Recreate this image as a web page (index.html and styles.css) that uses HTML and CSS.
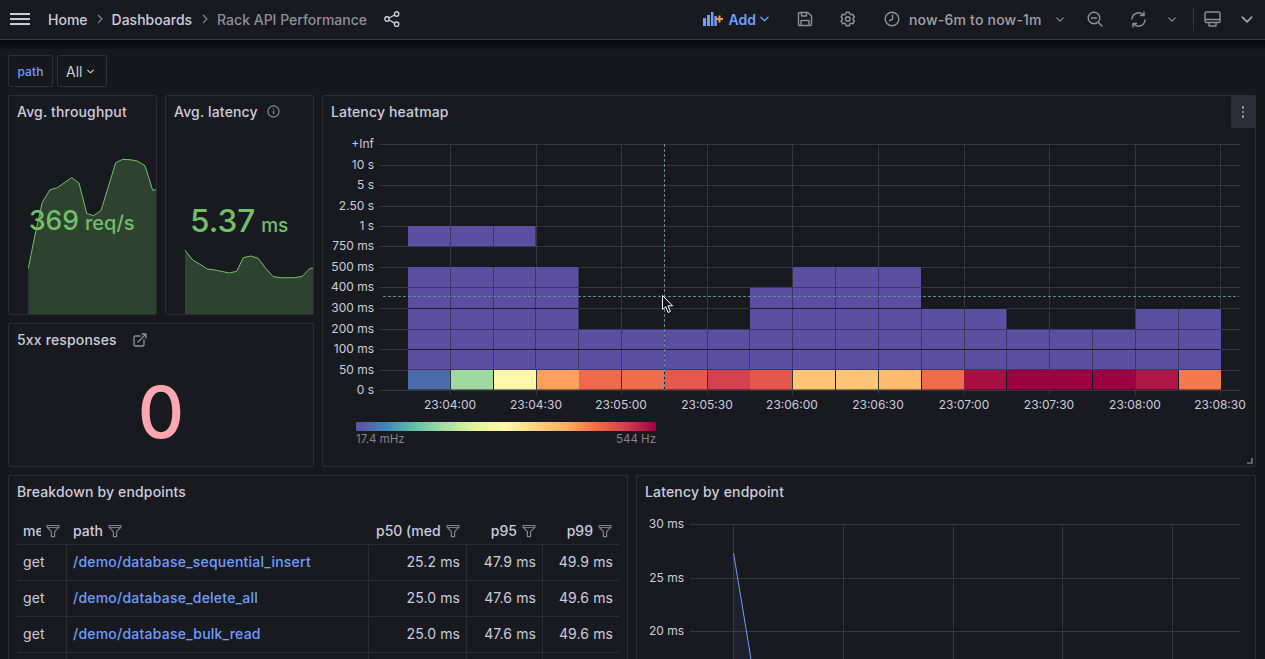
FILE: index.html
```html
<!DOCTYPE html>
<html lang="en">
<head>
<meta charset="utf-8">
<title>Rack API Performance</title>
<link rel="stylesheet" href="styles.css">
</head>
<body>
<svg class="defs" width="0" height="0" aria-hidden="true">
  <symbol id="funnel" viewBox="0 0 14 14"><path d="M1 1.5h12v1.6L8.6 7.6V12.6H5.4V7.6L1 3.1z" fill="none" stroke="currentColor" stroke-width="1.2" stroke-linejoin="round"/><path d="M1.5 3.6h11" stroke="currentColor" stroke-width="1"/></symbol>
  <symbol id="chev" viewBox="0 0 10 6"><path d="M1 1l4 4 4-4" fill="none" stroke="currentColor" stroke-width="1.5" stroke-linecap="round" stroke-linejoin="round"/></symbol>
</svg>

<header class="topbar">
  <svg class="burger" width="20" height="14" viewBox="0 0 20 14"><path d="M0 2h20M0 7h20M0 12h20" stroke="currentColor" stroke-width="1.8"/></svg>
  <nav class="crumbs">
    <span>Home</span>
    <svg class="crumb-sep" width="6" height="10" viewBox="0 0 6 10"><path d="M1 1l4 4-4 4" fill="none" stroke="currentColor" stroke-width="1.2"/></svg>
    <span>Dashboards</span>
    <svg class="crumb-sep" width="6" height="10" viewBox="0 0 6 10"><path d="M1 1l4 4-4 4" fill="none" stroke="currentColor" stroke-width="1.2"/></svg>
    <span class="crumb-current">Rack API Performance</span>
  </nav>
  <svg class="share" width="16" height="16" viewBox="0 0 16 16"><g fill="none" stroke="currentColor" stroke-width="1.4"><circle cx="3" cy="8" r="2.2"/><circle cx="12.6" cy="3" r="2.2"/><circle cx="12.6" cy="13.2" r="2.2"/><path d="M5 7l5.6-3M5 9l5.6 3.2"/></g></svg>

  <div class="tools">
    <svg class="add-icon" width="20" height="14" viewBox="0 0 20 14"><g fill="#6e9fff"><rect x="0" y="6" width="3" height="8"/><rect x="4" y="3" width="3" height="11"/><rect x="8" y="0" width="2.4" height="14"/><rect x="11.4" y="4" width="2.4" height="10"/></g><path d="M13 7h7M16.5 3.5v7" stroke="#ff9830" stroke-width="2"/></svg>
    <span class="add-text">Add</span>
    <svg class="add-chev" width="9" height="6"><use href="#chev"/></svg>
    <svg class="tool save" width="16" height="16" viewBox="0 0 16 16"><g fill="none" stroke="currentColor" stroke-width="1.4" stroke-linejoin="round"><path d="M1.5 2.5a1 1 0 0 1 1-1h8.4l3.6 3.6v8.400a1 1 0 0 1-1 1h-11a1 1 0 0 1-1-1z"/><path d="M4.500 1.500v3.500h5V1.500M4 14.500V9.500h8v5"/></g></svg>
    <svg class="tool gear" width="18" height="18" viewBox="0 0 24 24"><path fill="currentColor" d="M19.9,12.66a1,1,0,0,1,0-1.32L21.18,9.9a1,1,0,0,0,.12-1.17l-2-3.46a1,1,0,0,0-1.07-.48l-1.88.38a1,1,0,0,1-1.15-.66l-.61-1.83A1,1,0,0,0,13.64,2h-4a1,1,0,0,0-1,.68L8.08,4.51a1,1,0,0,1-1.15.66L5,4.79A1,1,0,0,0,4,5.27L2,8.73A1,1,0,0,0,2.1,9.9l1.27,1.44a1,1,0,0,1,0,1.32L2.1,14.1A1,1,0,0,0,2,15.27l2,3.46a1,1,0,0,0,1.07.48l1.88-.38a1,1,0,0,1,1.15.66l.61,1.83a1,1,0,0,0,1,.68h4a1,1,0,0,0,.95-.68l.61-1.83a1,1,0,0,1,1.15-.66l1.88.38a1,1,0,0,0,1.07-.48l2-3.46a1,1,0,0,0-.12-1.17ZM18.41,14l.8.9-1.28,2.22-1.18-.24a3,3,0,0,0-3.45,2L12.92,20H10.36L10,18.86a3,3,0,0,0-3.45-2l-1.18.24L4.07,14.89l.8-.9a3,3,0,0,0,0-4l-.8-.9L5.35,6.89l1.18.24a3,3,0,0,0,3.45-2L10.36,4h2.56l.38,1.14a3,3,0,0,0,3.45,2l1.18-.24,1.28,2.22-.8.9A3,3,0,0,0,18.41,14ZM11.64,8a4,4,0,1,0,4,4A4,4,0,0,0,11.64,8Zm0,6a2,2,0,1,1,2-2A2,2,0,0,1,11.64,14Z"/></svg>
    <svg class="tool clock" width="16" height="16" viewBox="0 0 16 16"><g fill="none" stroke="currentColor" stroke-width="1.4" stroke-linecap="round"><circle cx="8" cy="8" r="6.800"/><path d="M8.500 4v4.500L5.500 9.500"/></g></svg>
    <span class="time">now-6m to now-1m</span>
    <svg class="tool time-chev" width="8" height="5"><use href="#chev"/></svg>
    <svg class="tool zoom-out" width="16" height="16" viewBox="0 0 16 16"><g fill="none" stroke="currentColor" stroke-width="1.4" stroke-linecap="round"><circle cx="7" cy="7" r="5.800"/><path d="M11.400 11.400L15 15M4.500 7h5"/></g></svg>
    <svg class="tool refresh" width="17" height="17" viewBox="0 0 17 17"><g fill="none" stroke="currentColor" stroke-width="1.4" stroke-linecap="round" stroke-linejoin="round"><path d="M15 9a6.600 6.600 0 0 1-11.600 3.800"/><path d="M2 8A6.600 6.600 0 0 1 13.600 4.200"/><path d="M14 1v3.500h-3.500M3 16v-3.500h3.500"/></g></svg>
    <svg class="tool refresh-chev" width="8" height="5"><use href="#chev"/></svg>
    <span class="divider"></span>
    <svg class="tool tv" width="17" height="16" viewBox="0 0 17 16"><g fill="none" stroke="currentColor" stroke-width="1.4" stroke-linejoin="round"><rect x="1" y="1" width="15" height="10.500" rx="1.500"/><path d="M1 8.500h15M5 11.500v3.500h7v-3.500"/></g></svg>
    <svg class="tool tv-chev" width="12" height="7"><use href="#chev"/></svg>
  </div>
</header>
<div class="band"></div>

<main class="content">
  <div class="vars">
    <span class="var-label">path</span>
    <span class="var-select">All<svg width="7" height="5"><use href="#chev"/></svg></span>
  </div>

  <section class="row-top">
    <article class="panel">
      <h2 class="panel-title">Avg. throughput</h2>
      <svg class="spark" viewBox="9 96 147 218" preserveAspectRatio="none">
        <path class="spark-fill" d="M28.300 268.300L35 235L42.300 202.300L50 189.700L57.300 187.700L71.700 177.700L79 183L86.700 213.300L93.300 215.700L101 210.700L115.700 162.700L122.700 159.300L130 159.700L137.300 161L145 165.700L152.700 190.300L156.700 189.300V315H28.300Z"/>
        <path class="spark-line" d="M28.300 268.300L35 235L42.300 202.300L50 189.700L57.300 187.700L71.700 177.700L79 183L86.700 213.300L93.300 215.700L101 210.700L115.700 162.700L122.700 159.300L130 159.700L137.300 161L145 165.700L152.700 190.300L156.700 189.300"/>
      </svg>
      <div class="stat stat-rps"><span class="num">369</span><span class="unit">req/s</span></div>
    </article>

    <article class="panel">
      <h2 class="panel-title">Avg. latency
        <svg class="title-ic info" width="13" height="13" viewBox="0 0 13 13"><circle cx="6.500" cy="6.500" r="5.600" fill="none" stroke="currentColor" stroke-width="1.100"/><path d="M6.500 5.800v3.200M6.500 3.600v1" stroke="currentColor" stroke-width="1.300"/></svg>
      </h2>
      <svg class="spark" viewBox="166 96 147 218" preserveAspectRatio="none">
        <path class="spark-fill" d="M185 250.300L192.700 260L200 264.300L207.300 269L215 270L229.300 273L236.700 271.300L243.300 257.700L250.700 256L258.300 258.300L265.700 268.300L273.300 276.700L280.700 277.700L295 277.700L302.300 276.300L310 268.300L313.300 268.300V315H185Z"/>
        <path class="spark-line" d="M185 250.300L192.700 260L200 264.300L207.300 269L215 270L229.300 273L236.700 271.300L243.300 257.700L250.700 256L258.300 258.300L265.700 268.300L273.300 276.700L280.700 277.700L295 277.700L302.300 276.300L310 268.300L313.300 268.300"/>
      </svg>
      <div class="stat stat-ms"><span class="num">5.37</span><span class="unit">ms</span></div>
    </article>

    <article class="panel panel-heat">
      <h2 class="panel-title">Latency heatmap</h2>
      <span class="panel-menu"><i></i><i></i><i></i></span>
      <svg class="heat" width="932" height="337" viewBox="323 129 932 337">
        <defs>
          <linearGradient id="spectral">
            <stop offset="0" stop-color="#5e4fa2"/><stop offset=".1" stop-color="#3f87b8"/><stop offset=".2" stop-color="#66c2a5"/><stop offset=".3" stop-color="#abdda4"/><stop offset=".4" stop-color="#e6f598"/><stop offset=".5" stop-color="#fff8a8"/><stop offset=".6" stop-color="#fed27f"/><stop offset=".7" stop-color="#fdae61"/><stop offset=".8" stop-color="#f46d43"/><stop offset=".9" stop-color="#d53e4f"/><stop offset="1" stop-color="#9e0142"/>
          </linearGradient>
          <clipPath id="purple-area">
            <rect x="408" y="226" width="128" height="21"/><rect x="408" y="267" width="171" height="104"/><rect x="579" y="329" width="171" height="42"/><rect x="750" y="287" width="43" height="84"/><rect x="793" y="267" width="128" height="104"/><rect x="921" y="308" width="86" height="63"/><rect x="1007" y="329" width="128" height="42"/><rect x="1135" y="308" width="86" height="63"/>
          </clipPath>
        </defs>
        <path class="grid-line" d="M379 144.500H1240M379 165.500H1240M379 185.500H1240M379 206.500H1240M379 226.500H1240M379 246.500H1240M379 267.500H1240M379 287.500H1240M379 308.500H1240M379 329.500H1240M379 349.500H1240M379 370.500H1240M379 390.500H1240"/>
        <path class="grid-line" d="M450.500 144V395M536.500 144V395M621.500 144V395M707.500 144V395M792.500 144V395M878.500 144V395M964.500 144V395M1049.500 144V395M1135.500 144V395M1220.500 144V395"/>

        <g class="purple">
          <rect x="408" y="226" width="128" height="20"/><rect x="408" y="267" width="171" height="103"/><rect x="579" y="329" width="171" height="41"/><rect x="750" y="287" width="43" height="83"/><rect x="793" y="267" width="128" height="103"/><rect x="921" y="308" width="86" height="62"/><rect x="1007" y="329" width="128" height="41"/><rect x="1135" y="308" width="86" height="62"/>
        </g>
        <rect x="408" y="370" width="42" height="19.500" fill="#4c6cab"/>
        <rect x="451" y="370" width="42" height="19.500" fill="#a0d9a0"/>
        <rect x="494" y="370" width="42" height="19.500" fill="#fbf6a8"/>
        <rect x="537" y="370" width="42" height="19.500" fill="#fea05e"/>
        <rect x="579" y="370" width="42" height="19.500" fill="#ef6a4a"/>
        <rect x="622" y="370" width="42" height="19.500" fill="#f06c4a"/>
        <rect x="665" y="370" width="42" height="19.500" fill="#e6584c"/>
        <rect x="708" y="370" width="42" height="19.500" fill="#d4414e"/>
        <rect x="750" y="370" width="42" height="19.500" fill="#e6574b"/>
        <rect x="793" y="370" width="42" height="19.500" fill="#fec576"/>
        <rect x="836" y="370" width="42" height="19.500" fill="#fec576"/>
        <rect x="879" y="370" width="42" height="19.500" fill="#febb6e"/>
        <rect x="922" y="370" width="42" height="19.500" fill="#f06b49"/>
        <rect x="964" y="370" width="42" height="19.500" fill="#a80f42"/>
        <rect x="1007" y="370" width="43" height="19.500" fill="#9c0040"/>
        <rect x="1050" y="370" width="42" height="19.500" fill="#9c0040"/>
        <rect x="1093" y="370" width="42" height="19.500" fill="#9c0040"/>
        <rect x="1136" y="370" width="42" height="19.500" fill="#ae1745"/>
        <rect x="1179" y="370" width="42" height="19.500" fill="#f47a4d"/>

        <g clip-path="url(#purple-area)">
          <path class="seam" d="M450.500 226V370M493.500 226V370M535.500 226V370M578.500 226V370M621.500 226V370M664.500 226V370M707.500 226V370M749.500 226V370M792.500 226V370M835.500 226V370M878.500 226V370M921.500 226V370M964.500 226V370M1006.500 226V370M1049.500 226V370M1092.500 226V370M1135.500 226V370M1178.500 226V370"/>
          <path class="seam" d="M400 246.500H1230M400 287.500H1230M400 329.500H1230M400 369.500H1230"/>
          <path class="seam-dark" d="M400 308.500H1230M400 349.500H1230"/>
        </g>

        <path class="cross" d="M664.500 144V390M383 296.500H1239"/>

        <g class="axis axis-y">
          <text x="374" y="148">+Inf</text><text x="374" y="169">10 s</text><text x="374" y="189">5 s</text><text x="374" y="210">2.50 s</text><text x="374" y="230">1 s</text><text x="374" y="250">750 ms</text><text x="374" y="271">500 ms</text><text x="374" y="291">400 ms</text><text x="374" y="312">300 ms</text><text x="374" y="333">200 ms</text><text x="374" y="353">100 ms</text><text x="374" y="374">50 ms</text><text x="374" y="394">0 s</text>
        </g>
        <g class="axis axis-x">
          <text x="450" y="409">23:04:00</text><text x="536" y="409">23:04:30</text><text x="621" y="409">23:05:00</text><text x="707" y="409">23:05:30</text><text x="792" y="409">23:06:00</text><text x="878" y="409">23:06:30</text><text x="964" y="409">23:07:00</text><text x="1049" y="409">23:07:30</text><text x="1135" y="409">23:08:00</text><text x="1220" y="409">23:08:30</text>
        </g>

        <rect x="356" y="422" width="300" height="9" rx="1" fill="url(#spectral)"/>
        <text class="legend" x="356" y="443">17.4 mHz</text>
        <text class="legend legend-end" x="656" y="443">544 Hz</text>

        <path d="M662.500 295.500V309.500L665.800 306.600L668 312.500L670.400 311.400L668 305.800H672.500Z" fill="#111" stroke="#fff" stroke-width="1"/>
      </svg>
      <svg class="resize" width="6" height="6" viewBox="0 0 6 6"><path d="M0 5h5V0" fill="none" stroke="currentColor" stroke-width="1.600"/></svg>
    </article>

    <article class="panel panel-5xx">
      <h2 class="panel-title">5xx responses
        <svg class="title-ic ext" width="16" height="16" viewBox="0 0 24 24"><path fill="currentColor" d="M18,10.82a1,1,0,0,0-1,1V19a1,1,0,0,1-1,1H5a1,1,0,0,1-1-1V8A1,1,0,0,1,5,7h7.18a1,1,0,0,0,0-2H5A3,3,0,0,0,2,8V19a3,3,0,0,0,3,3H16a3,3,0,0,0,3-3V11.82A1,1,0,0,0,18,10.82Zm3.92-8.2a1,1,0,0,0-.54-.54A1,1,0,0,0,21,2H15a1,1,0,0,0,0,2h3.59L8.29,14.29a1,1,0,0,0,0,1.42,1,1,0,0,0,1.42,0L20,5.41V9a1,1,0,0,0,2,0V3A1,1,0,0,0,21.92,2.62Z"/></svg>
      </h2>
      <div class="big-zero">0</div>
    </article>
  </section>

  <section class="row-bottom">
    <article class="panel panel-table">
      <h2 class="panel-title">Breakdown by endpoints</h2>
      <table class="endpoints">
        <colgroup><col class="c-method"><col class="c-path"><col class="c-p50"><col class="c-p95"><col class="c-p99"></colgroup>
        <thead>
          <tr>
            <th><div class="th-in"><span class="th-text th-method">method</span><svg width="14" height="14"><use href="#funnel"/></svg></div></th>
            <th><div class="th-in"><span class="th-text">path</span><svg width="14" height="14"><use href="#funnel"/></svg></div></th>
            <th><div class="th-in th-right"><span class="th-text th-p50">p50 (median)</span><svg width="14" height="14"><use href="#funnel"/></svg></div></th>
            <th><div class="th-in th-right"><span class="th-text">p95</span><svg width="14" height="14"><use href="#funnel"/></svg></div></th>
            <th><div class="th-in th-right"><span class="th-text">p99</span><svg width="14" height="14"><use href="#funnel"/></svg></div></th>
          </tr>
        </thead>
        <tbody>
          <tr><td>get</td><td><a class="ep">/demo/database_sequential_insert</a></td><td class="n">25.2 ms</td><td class="n">47.9 ms</td><td class="n">49.9 ms</td></tr>
          <tr><td>get</td><td><a class="ep">/demo/database_delete_all</a></td><td class="n">25.0 ms</td><td class="n">47.6 ms</td><td class="n">49.6 ms</td></tr>
          <tr><td>get</td><td><a class="ep">/demo/database_bulk_read</a></td><td class="n">25.0 ms</td><td class="n">47.6 ms</td><td class="n">49.6 ms</td></tr>
          <tr><td></td><td></td><td></td><td></td><td></td></tr>
        </tbody>
      </table>
    </article>

    <article class="panel panel-lat">
      <h2 class="panel-title">Latency by endpoint</h2>
      <svg class="lat" width="618" height="170" viewBox="637 509 618 170">
        <path class="grid-line" d="M690 524.500H1240M690 578.500H1240M690 631.500H1240"/>
        <path class="grid-line" d="M733.500 524V680M843.500 524V680M953.500 524V680M1062.500 524V680M1172.500 524V680"/>
        <path d="M733.500 553L751 659V680H733.500Z" fill="#6e9fff" fill-opacity=".06"/>
        <path d="M733.500 553L751 659" fill="none" stroke="#6e9fff" stroke-width="1"/>
        <g class="axis axis-y">
          <text x="684" y="528">30 ms</text><text x="684" y="582">25 ms</text><text x="684" y="635">20 ms</text>
        </g>
      </svg>
    </article>
  </section>
</main>
</body>
</html>
```

FILE: styles.css
```css
* { box-sizing: border-box; }
html, body { margin: 0; height: 100%; }
body {
  background: #16181c;
  color: #ccccdc;
  font-family: Inter, "Liberation Sans", sans-serif;
  font-size: 14px;
  overflow: hidden;
}
.defs { position: absolute; }
svg { display: block; flex: none; }

/* top bar */
.topbar {
  height: 40px;
  display: flex;
  align-items: center;
  background: #181a1f;
  border-bottom: 1px solid #36373c;
  padding: 0 12px 1px 10px;
  font-weight: 500;
}
.burger { color: #ccccdc; }
.crumbs { display: flex; align-items: center; margin-left: 18px; color: #ccccdc; font-weight: 500; }
.crumb-sep { margin: 0 9px 0 9px; color: #84858c; }
.crumb-sep + span + .crumb-sep { margin-left: 10px; }
.crumb-current { color: #8e8f98; }
.share { margin-left: 17px; color: #ccccdc; }
.tools { margin-left: auto; display: flex; align-items: center; color: #a0a1ab; }
.add-text { margin-left: 6px; color: #6e9fff; font-weight: 600; }
.add-chev { margin-left: 4px; color: #6e9fff; }
.tool { color: #8e8f98; }
.save { margin-left: 28px; }
.gear { margin-left: 26px; }
.clock { margin-left: 27px; }
.time { width: 133px; margin-left: 9px; color: #a0a1ab; white-space: nowrap; letter-spacing: .2px; }
.time-chev { margin-left: 14px; }
.zoom-out { margin-left: 23px; }
.refresh { margin-left: 27px; }
.refresh-chev { margin-left: 21px; }
.divider { width: 1px; height: 24px; margin-left: 17px; background: #36373c; }
.tv { margin-left: 10px; }
.tv-chev { margin-left: 20px; color: #a0a1ab; }

.band { height: 10px; background: linear-gradient(#060709, #0e0f12 70%, #16181c); }

/* content */
.content { padding: 5px 9px 0 8px; }
.vars { display: flex; gap: 4px; height: 32px; margin-bottom: 8px; }
.var-label, .var-select {
  display: flex;
  align-items: center;
  height: 32px;
  border: 1px solid #2f3036;
  border-radius: 2px;
}
.var-label { width: 45px; justify-content: center; color: #6e9fff; font-size: 12px; font-weight: 500; letter-spacing: .1px; }
.var-select { width: 50px; padding-left: 8px; gap: 5px; color: #ccccdc; }

.row-top {
  display: grid;
  grid-template-columns: 149px 149px 934px;
  grid-template-rows: 220px 144px;
  gap: 8px;
}
.row-bottom {
  display: grid;
  grid-template-columns: 620px 620px;
  gap: 8px;
  margin-top: 8px;
  height: 320px;
}
.panel {
  position: relative;
  background: #181a1f;
  border: 1px solid #2c2d33;
  border-radius: 2px;
  overflow: hidden;
}
.panel-heat { grid-column: 3; grid-row: 1 / span 2; }
.panel-5xx { grid-column: 1 / span 2; grid-row: 2; }
.panel-title {
  display: flex;
  align-items: center;
  height: 33px;
  margin: 0;
  padding: 0 8px 2px;
  color: #ccccdc;
  font-size: 14px;
  font-weight: 500;
  letter-spacing: .16px;
  white-space: nowrap;
}
.panel-heat .panel-title { padding-left: 8px; }
.title-ic { color: #8e8f98; }
.info { margin-left: 9px; }
.ext { margin-left: 15px; }

/* stat */
.spark { position: absolute; left: 0; top: 0; width: 100%; height: 100%; }
.spark-fill { fill: #2d4330; }
.spark-line { fill: none; stroke: #73bf69; stroke-width: 1; }
.stat {
  position: absolute;
  display: flex;
  align-items: baseline;
  color: #73bf69;
  font-weight: 500;
  white-space: nowrap;
}
.stat-rps { left: 20px; top: 108px; }
.stat-rps .num { font-size: 26.5px; }
.stat-rps .unit { font-size: 20px; margin-left: 6px; }
.stat-ms { left: 24px; top: 105px; }
.stat-ms .num { font-size: 31.5px; }
.stat-ms .unit { font-size: 19px; margin-left: 6px; }
.big-zero {
  text-align: center;
  color: #ffa6b0;
  font-size: 72px;
  font-weight: 500;
  line-height: 90px;
  margin-top: 10px;
}

/* heatmap */
.heat { display: block; }
.grid-line { fill: none; stroke: #35373c; stroke-width: 1; }
.purple { fill: #5c4ea0; }
.seam { fill: none; stroke: #3d3766; stroke-width: 1; }
.seam-dark { fill: none; stroke: #1e1c30; stroke-width: 1; }
.cross { fill: none; stroke: #5f8b9a; stroke-width: 1; stroke-dasharray: 3 2; }
.axis text { fill: #ccccdc; font-size: 12px; font-family: Inter, "Liberation Sans", sans-serif; }
.axis-y text { text-anchor: end; }
.axis-x text { text-anchor: middle; }
.legend { fill: #84858c; font-size: 11.5px; font-family: Inter, "Liberation Sans", sans-serif; }
.legend-end { text-anchor: end; }
.panel-menu {
  position: absolute;
  top: 0;
  right: 0;
  width: 24px;
  height: 32px;
  display: flex;
  flex-direction: column;
  align-items: center;
  justify-content: center;
  gap: 2px;
  background: #2b2e36;
  border-radius: 2px;
}
.panel-menu i { width: 2.5px; height: 2.5px; background: #9a9ba5; border-radius: 50%; }
.resize { position: absolute; right: 2px; bottom: 2px; color: #75767e; }

/* table */
.endpoints {
  margin: 8px 0 0 8px;
  width: 602px;
  table-layout: fixed;
  border-collapse: separate;
  border-spacing: 0;
  color: #ccccdc;
}
.c-method { width: 50px; }
.c-path { width: 302px; }
.c-p50 { width: 98px; }
.c-p95 { width: 76px; }
.c-p99 { width: 76px; }
.endpoints th {
  height: 28px;
  padding: 0 7px 0 6px;
  border-bottom: 1px solid #2c2d33;
  font-weight: 500;
}
.th-in { display: flex; align-items: center; gap: 5px; color: #ccccdc; }
.th-in svg { color: #84858c; }
.th-right { justify-content: flex-end; }
.th-text { white-space: nowrap; }
.th-method { width: 18px; overflow: hidden; }
.th-p50 { width: 65px; overflow: hidden; }
.endpoints td {
  height: 36px;
  padding: 0 6px 2px;
  border-bottom: 1px solid #2c2d33;
  border-right: 1px solid #2c2d33;
  white-space: nowrap;
  letter-spacing: .1px;
}
.endpoints td:last-child { border-right: 0; }
.n { text-align: right; }
.ep { color: #6e9fff; font-weight: 500; letter-spacing: .22px; }
```
